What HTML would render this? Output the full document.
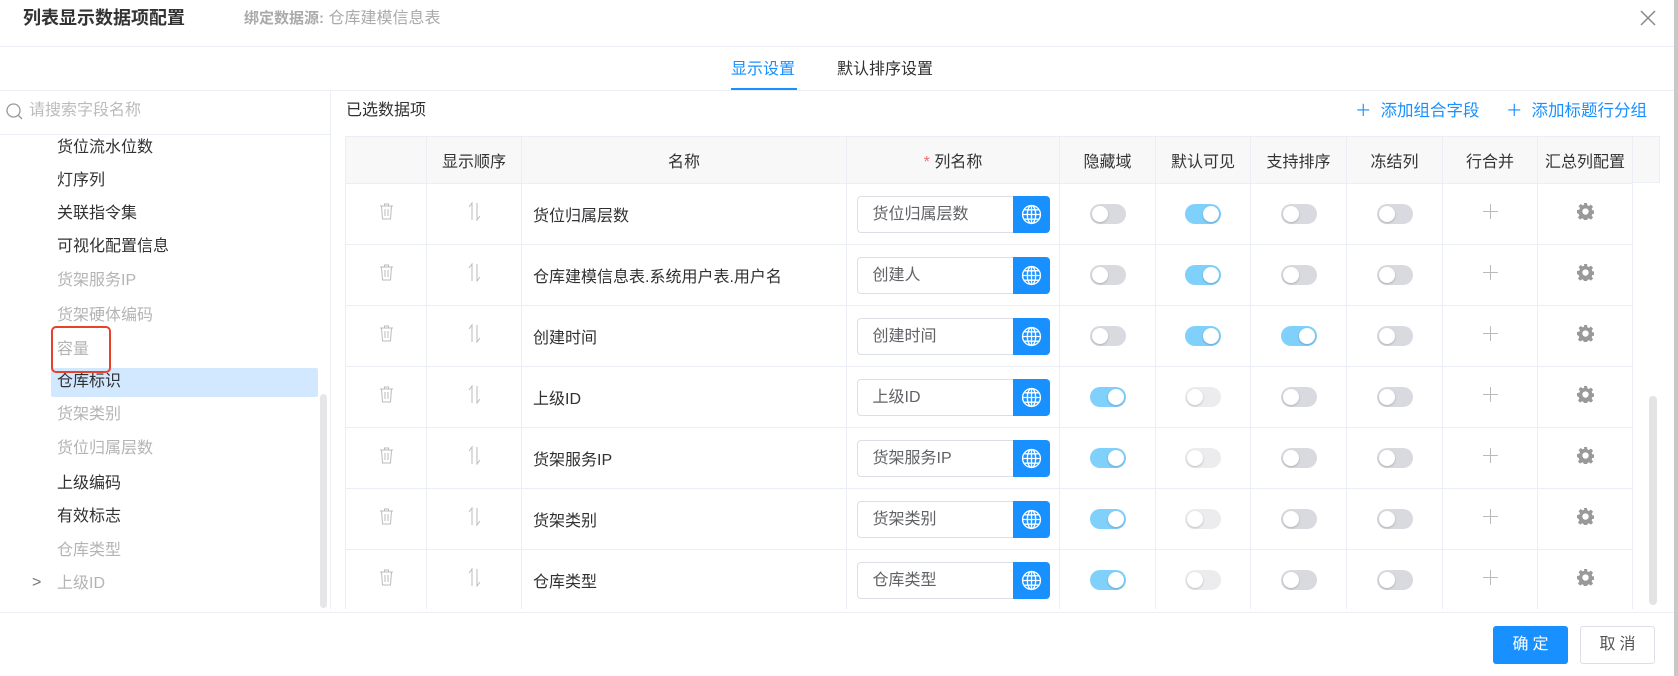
<!DOCTYPE html>
<html><head><meta charset="utf-8">
<style>
*{box-sizing:border-box;margin:0;padding:0}
body{width:1678px;height:676px;overflow:hidden;background:#fff;font-family:"Liberation Sans","Noto Sans CJK SC",sans-serif;font-size:16px;color:#303133;position:relative}
.abs{position:absolute;line-height:22px}
.hline{position:absolute;height:1px;background:#ebeef5}
.title{left:23px;top:7px;font-size:18px;font-weight:bold;color:#333}
.sub{left:244px;top:8px;font-size:16px;color:#aaa}
.sub b{font-weight:bold;font-size:15px}
.tab{top:59px;font-size:16px}
.left .it{position:absolute;left:57px;font-size:16px;color:#303133;line-height:22px}
.left .g{color:#b4b4b4}
table{position:absolute;left:345px;top:136px;border-collapse:collapse;table-layout:fixed}
td,th{border:1px solid #ebeef5;text-align:center;height:61px;font-weight:normal}
th{height:47px;background:#f8f8f9;color:#333}
td.n{text-align:left;padding-left:11px}
.inp{display:inline-flex;width:193px;height:37px;vertical-align:middle}
.inp span{flex:1;border:1px solid #dcdfe6;border-right:none;border-radius:4px 0 0 4px;text-align:left;padding-left:15px;line-height:35px;color:#606266}
.inp i{width:37px;background:#1890ff;border-radius:0 4px 4px 0;display:flex;align-items:center;justify-content:center}
.sw{display:inline-block;width:36px;height:20px;border-radius:10px;background:#d9d9e0;position:relative;vertical-align:middle}
.sw:after{content:"";position:absolute;top:2px;left:2px;width:16px;height:16px;border-radius:50%;background:#fff;box-shadow:0 1px 2px rgba(0,0,0,.2)}
.sw.on{background:#80d0fc}.sw.on:after{left:18px}
.sw.d{background:#ececee}
.add{color:#1890ff;font-size:16.5px}
.add em{font-style:normal;margin-right:9px}
</style></head><body>
<div class="abs title">列表显示数据项配置</div>
<div class="abs sub"><b>绑定数据源:</b> 仓库建模信息表</div>
<svg class="abs" style="left:1640px;top:10px" width="16" height="16"><path d="M1 1L15 15M15 1L1 15" stroke="#888" stroke-width="1.5"/></svg>
<div class="hline" style="left:0;top:46px;width:1674px"></div>
<div class="abs tab" style="left:731px;color:#1890ff">显示设置</div>
<div class="abs" style="left:731px;top:88px;width:66px;height:2px;background:#1890ff"></div>
<div class="abs tab" style="left:837px;color:#303133">默认排序设置</div>
<div class="hline" style="left:0;top:90px;width:1674px"></div>
<div class="abs" style="left:1674px;top:0;width:4px;height:676px;background:#c8c8c8"></div>
<!-- left -->
<div class="abs" style="left:330px;top:91px;width:1px;height:521px;background:#ebeef5"></div>
<svg class="abs" style="left:6px;top:103px" width="17" height="17"><circle cx="7.5" cy="7.5" r="6.5" fill="none" stroke="#999" stroke-width="1.3"/><path d="M12 12L16 16" stroke="#999" stroke-width="1.3"/></svg>
<div class="abs" style="left:29px;top:100px;color:#bbb">请搜索字段名称</div>
<div class="hline" style="left:0;top:134px;width:330px"></div>
<div class="abs" style="left:51px;top:368px;width:267px;height:29px;background:#d1e8ff;border-radius:2px"></div>
<div class="abs" style="left:320px;top:394px;width:7px;height:214px;background:#e6e6e6;border-radius:4px"></div>
<div class="left">
<div class="it" style="top:137px">货位流水位数</div>
<div class="it" style="top:170px">灯序列</div>
<div class="it" style="top:203px">关联指令集</div>
<div class="it" style="top:236px">可视化配置信息</div>
<div class="it g" style="top:270px">货架服务IP</div>
<div class="it g" style="top:305px">货架硬体编码</div>
<div class="it g" style="top:339px">容量</div>
<div class="it" style="top:371px">仓库标识</div>
<div class="it g" style="top:404px">货架类别</div>
<div class="it g" style="top:438px">货位归属层数</div>
<div class="it" style="top:473px">上级编码</div>
<div class="it" style="top:506px">有效标志</div>
<div class="it g" style="top:540px">仓库类型</div>
<div class="it g" style="top:573px">上级ID</div>
<div class="abs" style="left:32px;top:572px;color:#777">&gt;</div>
</div>
<div class="abs" style="left:51px;top:326px;width:60px;height:47px;border:2px solid #e8412c;border-radius:5px"></div>
<!-- right -->
<div class="abs" style="left:346px;top:100px">已选数据项</div>
<div class="abs add" style="left:1355px;top:100px"><em>＋</em>添加组合字段</div>
<div class="abs add" style="left:1506px;top:100px"><em>＋</em>添加标题行分组</div>
<div class="abs" style="left:345px;top:136px;width:1315px;height:47px;background:#f8f8f9;border:1px solid #ebeef5"></div>
<div class="abs" style="left:1649px;top:396px;width:8px;height:209px;background:#e3e3e3;border-radius:4px"></div>
<table>
<colgroup><col style="width:81px"><col style="width:95px"><col style="width:325px"><col style="width:213px"><col style="width:96px"><col style="width:95px"><col style="width:96px"><col style="width:96px"><col style="width:95px"><col style="width:95px"></colgroup>
<tr><th></th><th>显示顺序</th><th>名称</th><th><span style="color:#f56c6c">*</span> 列名称</th><th>隐藏域</th><th>默认可见</th><th>支持排序</th><th>冻结列</th><th>行合并</th><th>汇总列配置</th></tr>
<tr><td><svg width="15" height="17"><path d="M1 3H14M5.5 3V1H9.5V3M2.5 3L3.5 16H11.5L12.5 3M6 6V13M9 6V13" stroke="#bbb" fill="none"/></svg></td><td><svg width="15" height="19"><path d="M5 18V1L2 5M10 1V18L13 14" stroke="#bbb" fill="none"/></svg></td><td class="n">货位归属层数</td><td><div class="inp"><span>货位归属层数</span><i><svg width="21" height="21" viewBox="0 0 20 20" fill="none" stroke="#fff" stroke-width="1.3"><circle cx="10" cy="10" r="8.5"/><ellipse cx="10" cy="10" rx="4" ry="8.5"/><path d="M10 1.5V18.5M1.5 10H18.5M3 5.5H17M3 14.5H17"/></svg></i></div></td><td><span class="sw"></span></td><td><span class="sw on"></span></td><td><span class="sw"></span></td><td><span class="sw"></span></td><td><svg width="15" height="15"><path d="M7.5 0V15M0 7.5H15" stroke="#bbb"/></svg></td><td><svg width="17" height="17" viewBox="0 0 16 16"><path fill="#999" d="M6.6 0h2.8l.4 2.2 1.4.6 1.9-1.3 2 2-1.3 1.9.6 1.4 2.2.4v2.8l-2.2.4-.6 1.4 1.3 1.9-2 2-1.9-1.3-1.4.6-.4 2.2H6.6l-.4-2.2-1.4-.6-1.9 1.3-2-2 1.3-1.9-.6-1.4L0 9.4V6.6l2.2-.4.6-1.4-1.3-1.9 2-2 1.9 1.3 1.4-.6zM8 5a3 3 0 100 6 3 3 0 000-6z"/></svg></td></tr>
<tr><td><svg width="15" height="17"><path d="M1 3H14M5.5 3V1H9.5V3M2.5 3L3.5 16H11.5L12.5 3M6 6V13M9 6V13" stroke="#bbb" fill="none"/></svg></td><td><svg width="15" height="19"><path d="M5 18V1L2 5M10 1V18L13 14" stroke="#bbb" fill="none"/></svg></td><td class="n">仓库建模信息表.系统用户表.用户名</td><td><div class="inp"><span>创建人</span><i><svg width="21" height="21" viewBox="0 0 20 20" fill="none" stroke="#fff" stroke-width="1.3"><circle cx="10" cy="10" r="8.5"/><ellipse cx="10" cy="10" rx="4" ry="8.5"/><path d="M10 1.5V18.5M1.5 10H18.5M3 5.5H17M3 14.5H17"/></svg></i></div></td><td><span class="sw"></span></td><td><span class="sw on"></span></td><td><span class="sw"></span></td><td><span class="sw"></span></td><td><svg width="15" height="15"><path d="M7.5 0V15M0 7.5H15" stroke="#bbb"/></svg></td><td><svg width="17" height="17" viewBox="0 0 16 16"><path fill="#999" d="M6.6 0h2.8l.4 2.2 1.4.6 1.9-1.3 2 2-1.3 1.9.6 1.4 2.2.4v2.8l-2.2.4-.6 1.4 1.3 1.9-2 2-1.9-1.3-1.4.6-.4 2.2H6.6l-.4-2.2-1.4-.6-1.9 1.3-2-2 1.3-1.9-.6-1.4L0 9.4V6.6l2.2-.4.6-1.4-1.3-1.9 2-2 1.9 1.3 1.4-.6zM8 5a3 3 0 100 6 3 3 0 000-6z"/></svg></td></tr>
<tr><td><svg width="15" height="17"><path d="M1 3H14M5.5 3V1H9.5V3M2.5 3L3.5 16H11.5L12.5 3M6 6V13M9 6V13" stroke="#bbb" fill="none"/></svg></td><td><svg width="15" height="19"><path d="M5 18V1L2 5M10 1V18L13 14" stroke="#bbb" fill="none"/></svg></td><td class="n">创建时间</td><td><div class="inp"><span>创建时间</span><i><svg width="21" height="21" viewBox="0 0 20 20" fill="none" stroke="#fff" stroke-width="1.3"><circle cx="10" cy="10" r="8.5"/><ellipse cx="10" cy="10" rx="4" ry="8.5"/><path d="M10 1.5V18.5M1.5 10H18.5M3 5.5H17M3 14.5H17"/></svg></i></div></td><td><span class="sw"></span></td><td><span class="sw on"></span></td><td><span class="sw on"></span></td><td><span class="sw"></span></td><td><svg width="15" height="15"><path d="M7.5 0V15M0 7.5H15" stroke="#bbb"/></svg></td><td><svg width="17" height="17" viewBox="0 0 16 16"><path fill="#999" d="M6.6 0h2.8l.4 2.2 1.4.6 1.9-1.3 2 2-1.3 1.9.6 1.4 2.2.4v2.8l-2.2.4-.6 1.4 1.3 1.9-2 2-1.9-1.3-1.4.6-.4 2.2H6.6l-.4-2.2-1.4-.6-1.9 1.3-2-2 1.3-1.9-.6-1.4L0 9.4V6.6l2.2-.4.6-1.4-1.3-1.9 2-2 1.9 1.3 1.4-.6zM8 5a3 3 0 100 6 3 3 0 000-6z"/></svg></td></tr>
<tr><td><svg width="15" height="17"><path d="M1 3H14M5.5 3V1H9.5V3M2.5 3L3.5 16H11.5L12.5 3M6 6V13M9 6V13" stroke="#bbb" fill="none"/></svg></td><td><svg width="15" height="19"><path d="M5 18V1L2 5M10 1V18L13 14" stroke="#bbb" fill="none"/></svg></td><td class="n">上级ID</td><td><div class="inp"><span>上级ID</span><i><svg width="21" height="21" viewBox="0 0 20 20" fill="none" stroke="#fff" stroke-width="1.3"><circle cx="10" cy="10" r="8.5"/><ellipse cx="10" cy="10" rx="4" ry="8.5"/><path d="M10 1.5V18.5M1.5 10H18.5M3 5.5H17M3 14.5H17"/></svg></i></div></td><td><span class="sw on"></span></td><td><span class="sw d"></span></td><td><span class="sw"></span></td><td><span class="sw"></span></td><td><svg width="15" height="15"><path d="M7.5 0V15M0 7.5H15" stroke="#bbb"/></svg></td><td><svg width="17" height="17" viewBox="0 0 16 16"><path fill="#999" d="M6.6 0h2.8l.4 2.2 1.4.6 1.9-1.3 2 2-1.3 1.9.6 1.4 2.2.4v2.8l-2.2.4-.6 1.4 1.3 1.9-2 2-1.9-1.3-1.4.6-.4 2.2H6.6l-.4-2.2-1.4-.6-1.9 1.3-2-2 1.3-1.9-.6-1.4L0 9.4V6.6l2.2-.4.6-1.4-1.3-1.9 2-2 1.9 1.3 1.4-.6zM8 5a3 3 0 100 6 3 3 0 000-6z"/></svg></td></tr>
<tr><td><svg width="15" height="17"><path d="M1 3H14M5.5 3V1H9.5V3M2.5 3L3.5 16H11.5L12.5 3M6 6V13M9 6V13" stroke="#bbb" fill="none"/></svg></td><td><svg width="15" height="19"><path d="M5 18V1L2 5M10 1V18L13 14" stroke="#bbb" fill="none"/></svg></td><td class="n">货架服务IP</td><td><div class="inp"><span>货架服务IP</span><i><svg width="21" height="21" viewBox="0 0 20 20" fill="none" stroke="#fff" stroke-width="1.3"><circle cx="10" cy="10" r="8.5"/><ellipse cx="10" cy="10" rx="4" ry="8.5"/><path d="M10 1.5V18.5M1.5 10H18.5M3 5.5H17M3 14.5H17"/></svg></i></div></td><td><span class="sw on"></span></td><td><span class="sw d"></span></td><td><span class="sw"></span></td><td><span class="sw"></span></td><td><svg width="15" height="15"><path d="M7.5 0V15M0 7.5H15" stroke="#bbb"/></svg></td><td><svg width="17" height="17" viewBox="0 0 16 16"><path fill="#999" d="M6.6 0h2.8l.4 2.2 1.4.6 1.9-1.3 2 2-1.3 1.9.6 1.4 2.2.4v2.8l-2.2.4-.6 1.4 1.3 1.9-2 2-1.9-1.3-1.4.6-.4 2.2H6.6l-.4-2.2-1.4-.6-1.9 1.3-2-2 1.3-1.9-.6-1.4L0 9.4V6.6l2.2-.4.6-1.4-1.3-1.9 2-2 1.9 1.3 1.4-.6zM8 5a3 3 0 100 6 3 3 0 000-6z"/></svg></td></tr>
<tr><td><svg width="15" height="17"><path d="M1 3H14M5.5 3V1H9.5V3M2.5 3L3.5 16H11.5L12.5 3M6 6V13M9 6V13" stroke="#bbb" fill="none"/></svg></td><td><svg width="15" height="19"><path d="M5 18V1L2 5M10 1V18L13 14" stroke="#bbb" fill="none"/></svg></td><td class="n">货架类别</td><td><div class="inp"><span>货架类别</span><i><svg width="21" height="21" viewBox="0 0 20 20" fill="none" stroke="#fff" stroke-width="1.3"><circle cx="10" cy="10" r="8.5"/><ellipse cx="10" cy="10" rx="4" ry="8.5"/><path d="M10 1.5V18.5M1.5 10H18.5M3 5.5H17M3 14.5H17"/></svg></i></div></td><td><span class="sw on"></span></td><td><span class="sw d"></span></td><td><span class="sw"></span></td><td><span class="sw"></span></td><td><svg width="15" height="15"><path d="M7.5 0V15M0 7.5H15" stroke="#bbb"/></svg></td><td><svg width="17" height="17" viewBox="0 0 16 16"><path fill="#999" d="M6.6 0h2.8l.4 2.2 1.4.6 1.9-1.3 2 2-1.3 1.9.6 1.4 2.2.4v2.8l-2.2.4-.6 1.4 1.3 1.9-2 2-1.9-1.3-1.4.6-.4 2.2H6.6l-.4-2.2-1.4-.6-1.9 1.3-2-2 1.3-1.9-.6-1.4L0 9.4V6.6l2.2-.4.6-1.4-1.3-1.9 2-2 1.9 1.3 1.4-.6zM8 5a3 3 0 100 6 3 3 0 000-6z"/></svg></td></tr>
<tr><td><svg width="15" height="17"><path d="M1 3H14M5.5 3V1H9.5V3M2.5 3L3.5 16H11.5L12.5 3M6 6V13M9 6V13" stroke="#bbb" fill="none"/></svg></td><td><svg width="15" height="19"><path d="M5 18V1L2 5M10 1V18L13 14" stroke="#bbb" fill="none"/></svg></td><td class="n">仓库类型</td><td><div class="inp"><span>仓库类型</span><i><svg width="21" height="21" viewBox="0 0 20 20" fill="none" stroke="#fff" stroke-width="1.3"><circle cx="10" cy="10" r="8.5"/><ellipse cx="10" cy="10" rx="4" ry="8.5"/><path d="M10 1.5V18.5M1.5 10H18.5M3 5.5H17M3 14.5H17"/></svg></i></div></td><td><span class="sw on"></span></td><td><span class="sw d"></span></td><td><span class="sw"></span></td><td><span class="sw"></span></td><td><svg width="15" height="15"><path d="M7.5 0V15M0 7.5H15" stroke="#bbb"/></svg></td><td><svg width="17" height="17" viewBox="0 0 16 16"><path fill="#999" d="M6.6 0h2.8l.4 2.2 1.4.6 1.9-1.3 2 2-1.3 1.9.6 1.4 2.2.4v2.8l-2.2.4-.6 1.4 1.3 1.9-2 2-1.9-1.3-1.4.6-.4 2.2H6.6l-.4-2.2-1.4-.6-1.9 1.3-2-2 1.3-1.9-.6-1.4L0 9.4V6.6l2.2-.4.6-1.4-1.3-1.9 2-2 1.9 1.3 1.4-.6zM8 5a3 3 0 100 6 3 3 0 000-6z"/></svg></td></tr>
</table>
<div class="abs" style="left:0;top:609px;width:1674px;height:67px;background:#fff"></div>
<div class="hline" style="left:0;top:612px;width:1674px"></div>
<div class="abs" style="left:1493px;top:626px;width:75px;height:38px;background:#1890ff;border-radius:3px;color:#fff;text-align:center;line-height:38px;letter-spacing:4px;text-indent:4px">确定</div>
<div class="abs" style="left:1580px;top:626px;width:75px;height:38px;border:1px solid #dcdfe6;border-radius:3px;color:#555;text-align:center;line-height:36px;letter-spacing:4px;text-indent:4px">取消</div>
</body></html>
